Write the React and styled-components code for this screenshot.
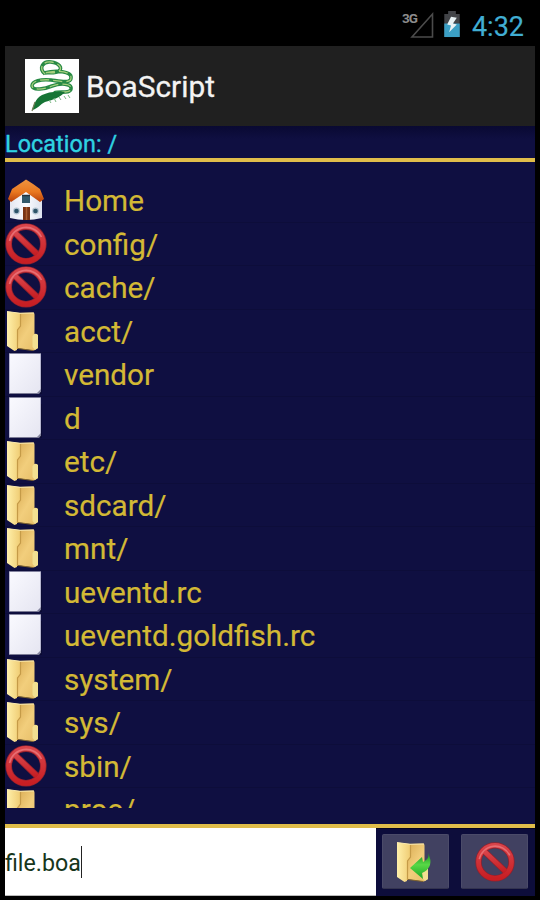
import React from "react";
import styled, { createGlobalStyle } from "styled-components";

const GlobalStyle = createGlobalStyle`
  * { box-sizing: border-box; }
  body { margin: 0; background: #000; }
`;

const Phone = styled.div`
  width: 540px;
  height: 900px;
  padding: 0 5px 4px;
  background: #000;
  display: flex;
  flex-direction: column;
  overflow: hidden;
  font-family: Roboto, sans-serif;
`;

const StatusBar = styled.div`
  height: 46px;
  flex: none;
  display: flex;
  align-items: flex-start;
  justify-content: flex-end;
  padding-right: 11px;
`;

const SignalIcon = styled.svg`
  width: 34px;
  height: 32px;
  margin: 9px 7px 0 0;
`;

const BatteryIcon = styled.svg`
  width: 18px;
  height: 27px;
  margin: 11px 11px 0 0;
`;

const Clock = styled.div`
  color: #41aed3;
  font-size: 27px;
  line-height: 30px;
  margin-top: 12px;
  -webkit-text-stroke: 0.2px #41aed3;
`;

const ActionBar = styled.header`
  height: 80px;
  flex: none;
  display: flex;
  align-items: center;
  gap: 7px;
  padding-left: 20px;
  background: #202020;
`;

const Logo = styled.svg`
  width: 54px;
  height: 54px;
  background: #fff;
`;

const Title = styled.h1`
  margin: 2px 0 0;
  color: #f3f3f3;
  font-size: 29.8px;
  font-weight: 400;
  line-height: 34px;
  -webkit-text-stroke: 0.3px #f3f3f3;
`;

const Location = styled.div`
  height: 36px;
  flex: none;
  border-bottom: 4px solid #e0bd4a;
  background: linear-gradient(#090932, #0f0f41 40%);
  color: #2fd3e2;
  font-size: 23.3px;
  line-height: 37px;
  letter-spacing: 0.1px;
  -webkit-text-stroke: 0.4px #2fd3e2;
`;

const ListPane = styled.main`
  height: 666px;
  flex: none;
  padding: 17px 0;
  border-bottom: 4px solid #e0bd4a;
  background: #0f0f41;
`;

const FileList = styled.ul`
  margin: 0;
  padding: 0;
  height: 629px;
  overflow: hidden;
  list-style: none;
`;

const FileRow = styled.li`
  height: 43.53px;
  display: flex;
  align-items: flex-start;
  gap: 17px;
  border-bottom: 1px solid #0d0d3a;
`;

const FileIcon = styled.svg`
  width: ${({ $size = 42 }) => $size}px;
  height: ${({ $size = 42 }) => $size}px;
  flex: none;
  display: block;
`;

const FileName = styled.span`
  color: #d3b935;
  font-size: 29.7px;
  line-height: 44px;
  white-space: nowrap;
  -webkit-text-stroke: 0.2px #d3b935;
`;

const Footer = styled.footer`
  height: 68px;
  flex: none;
  display: flex;
  background: #0d0d3b;
`;

const NameField = styled.div`
  width: 371px;
  display: flex;
  align-items: center;
  padding-top: 2px;
  background: #fff;
  border-bottom: 1px solid #bbb;
  color: #17361b;
  font-size: 23.2px;
`;

const Caret = styled.span`
  width: 1.5px;
  height: 32px;
  margin-top: -2px;
  background: #222;
`;

const Actions = styled.div`
  flex: 1;
  display: flex;
  gap: 12px;
  padding: 5px 0 0 6px;
  border-top: 1px solid #050522;
`;

const ActionButton = styled.button`
  width: 67px;
  height: 55px;
  padding: 0;
  border: 1px solid #4b4b69;
  border-bottom-color: #33334f;
  border-radius: 2px;
  background: #414161;
  display: flex;
  align-items: center;
  justify-content: center;
`;

function Gradients() {
  return (
    <defs>
      <linearGradient id="roof" x2="0" y2="1">
        <stop stopColor="#ee9440" />
        <stop offset=".55" stopColor="#e97820" />
        <stop offset="1" stopColor="#b9410c" />
      </linearGradient>
      <linearGradient id="wall" x2="1">
        <stop stopColor="#e4e7f0" />
        <stop offset=".5" stopColor="#fafbff" />
        <stop offset="1" stopColor="#dde2ee" />
      </linearGradient>
      <linearGradient id="red" x2="0" y2="1">
        <stop stopColor="#d9444a" />
        <stop offset="1" stopColor="#c71e23" />
      </linearGradient>
      <linearGradient id="flap" x2="1">
        <stop stopColor="#fff0aa" />
        <stop offset="1" stopColor="#f0cd75" />
      </linearGradient>
      <linearGradient id="back" x2="1" y2="1">
        <stop stopColor="#d8aa52" />
        <stop offset=".5" stopColor="#f2ce7c" />
        <stop offset="1" stopColor="#e5bc66" />
      </linearGradient>
      <linearGradient id="paper" x2="1" y2="1">
        <stop stopColor="#fafaff" />
        <stop offset="1" stopColor="#e5e5f1" />
      </linearGradient>
      <linearGradient id="arrow" x2="0" y2="1">
        <stop stopColor="#168f22" />
        <stop offset=".45" stopColor="#58d846" />
        <stop offset="1" stopColor="#1aa624" />
      </linearGradient>
    </defs>
  );
}

function HomeArt() {
  return (
    <>
      <path d="M5 19 21 8l16 11v20q-8 2-16 2T5 39Z" fill="url(#wall)" />
      <path d="M3 20 7 10Q16 4 21 .5 27 4 35 10l4 10-4 3-14-10L6 23Z" fill="url(#roof)" />
      <path d="M17 17h8v7h-8z" fill="#32596b" />
      <path d="M17 16.5h8" stroke="#24323c" strokeWidth="1.5" />
      <path d="M18 28h7v13h-7z" fill="#7a3414" />
      <path d="M21.5 28v13" stroke="#a85c30" strokeWidth="1.5" />
      <circle cx="11.5" cy="32" r="3.4" fill="#b4c4d2" />
      <circle cx="30.5" cy="32" r="3.4" fill="#b4c4d2" />
      <circle cx="11.5" cy="32" r="2.3" fill="#2d5368" />
      <circle cx="30.5" cy="32" r="2.3" fill="#2d5368" />
    </>
  );
}

function DeniedArt() {
  return (
    <>
      <g fill="none" stroke="#94202c" strokeWidth="6.6">
        <circle cx="21" cy="20.9" r="17.3" />
        <path d="m10 10 22 21" />
      </g>
      <g fill="none" stroke="url(#red)" strokeWidth="5">
        <circle cx="21" cy="20.9" r="17.3" />
        <path d="m10 10 22 21" />
      </g>
      <path d="M4.5 18a17 17 0 0 1 32-4" fill="none" stroke="#e76d72" strokeWidth="1.6" />
    </>
  );
}

function FolderArt() {
  return (
    <>
      <path d="M12 3 28 2.5q1.5 0 1.5 2V24l3.5 1v13l-4 2.5-18-2.5Z" fill="url(#back)" />
      <path d="M27.5 26q2.5-4 5.5-1v13l-3 2-2.5-3Z" fill="#f2df91" />
      <path d="M2 1.5 15 3v13l-3 4v20l-2.5 1L2 36Z" fill="url(#flap)" />
      <path d="m2 1.5 13 1.8 14-.3" fill="none" stroke="#f9e9ae" />
      <path d="M15.5 4v12l-3 4v19" fill="none" stroke="#c59b48" strokeWidth="1.2" />
      <path d="m13 38.5 15 2" stroke="#80642e" />
    </>
  );
}

function PaperArt() {
  return (
    <>
      <path d="M5 41h32V7H9Z" fill="#09092b" opacity=".6" />
      <path d="M4 .5h32V38l-2.5 2.5H4Z" fill="url(#paper)" />
      <path d="M4.5 1v39M35.5 1v37" stroke="#b7b7d0" />
      <path d="m32 40 4-4v2.5L34 41Z" fill="#85859e" />
    </>
  );
}

const artByKind = { home: HomeArt, denied: DeniedArt, folder: FolderArt, paper: PaperArt };

const files = [
  ["home", "Home"],
  ["denied", "config/"],
  ["denied", "cache/"],
  ["folder", "acct/"],
  ["paper", "vendor"],
  ["paper", "d"],
  ["folder", "etc/"],
  ["folder", "sdcard/"],
  ["folder", "mnt/"],
  ["paper", "ueventd.rc"],
  ["paper", "ueventd.goldfish.rc"],
  ["folder", "system/"],
  ["folder", "sys/"],
  ["denied", "sbin/"],
  ["folder", "proc/"],
];

function SnakeLogo() {
  const body =
    "M20 15C13 9 18 2 26 3c8 1 12 6 8 9-4 3-11 1-15 2 12-3 28-2 27 5 0 6-12 3-20 2-10-1-19 1-19 6 1 5 13 3 20 0 8-3 20-3 19 3-1 5-11 2-17 4";
  return (
    <Logo viewBox="0 0 54 54">
      <path d={body} fill="none" stroke="#288a45" strokeWidth="3.6" />
      <path d={body} fill="none" stroke="#a6cf7d" strokeWidth="1.3" strokeDasharray="9 4" />
      <path d="M40 33c-10-1-17 0-23 3-7 4-8 10-10 15 6-1 8-6 13-8 7-2 15-4 20-10Z" fill="#167435" />
      <path d="m7 52 3-9" stroke="#737d56" strokeWidth="1.2" />
      <path d="m24 41 2 3m3-5 2 4m3-5 2 3m3-4 2 3m2-4 2 3" stroke="#79b783" />
    </Logo>
  );
}

export default function App() {
  return (
    <>
      <GlobalStyle />
      <Phone>
        <StatusBar>
          <SignalIcon viewBox="0 0 34 32">
            <text x="0" y="14" fill="#8c8c8c" fontFamily="Roboto" fontSize="13.5" fontWeight="700" textLength="16">3G</text>
            <path d="M30.5 5v23H10Z" fill="none" stroke="#4b4b4b" strokeWidth="1.6" />
          </SignalIcon>
          <BatteryIcon viewBox="0 0 18 28">
            <path d="M1 3h4V0h8v3h4v24H1Z" fill="#424448" />
            <path d="M1 13h16v14H1Z" fill="#3b9fc4" />
            <path d="m8 6 6 1-4 6 4 1-8 8 2-7-4-1Z" fill="#e8f2f4" />
          </BatteryIcon>
          <Clock>4:32</Clock>
        </StatusBar>
        <ActionBar>
          <SnakeLogo />
          <Title>BoaScript</Title>
        </ActionBar>
        <Location>Location: /</Location>
        <ListPane>
          <FileList>
            {files.map(([kind, name]) => {
              const Art = artByKind[kind];
              return (
                <FileRow key={name}>
                  <FileIcon viewBox="0 0 42 42">
                    {kind === "home" && <Gradients />}
                    <Art />
                  </FileIcon>
                  <FileName>{name}</FileName>
                </FileRow>
              );
            })}
          </FileList>
        </ListPane>
        <Footer>
          <NameField>
            file.boa
            <Caret />
          </NameField>
          <Actions>
            <ActionButton aria-label="Open">
              <FileIcon viewBox="0 0 42 42">
                <FolderArt />
                <path d="M33 12q7 14-6 20l1 6-13-11 12-11 1 5q7-3 5-9Z" fill="url(#arrow)" />
              </FileIcon>
            </ActionButton>
            <ActionButton aria-label="Cancel">
              <FileIcon $size={40} viewBox="0 0 42 42">
                <DeniedArt />
              </FileIcon>
            </ActionButton>
          </Actions>
        </Footer>
      </Phone>
    </>
  );
}
